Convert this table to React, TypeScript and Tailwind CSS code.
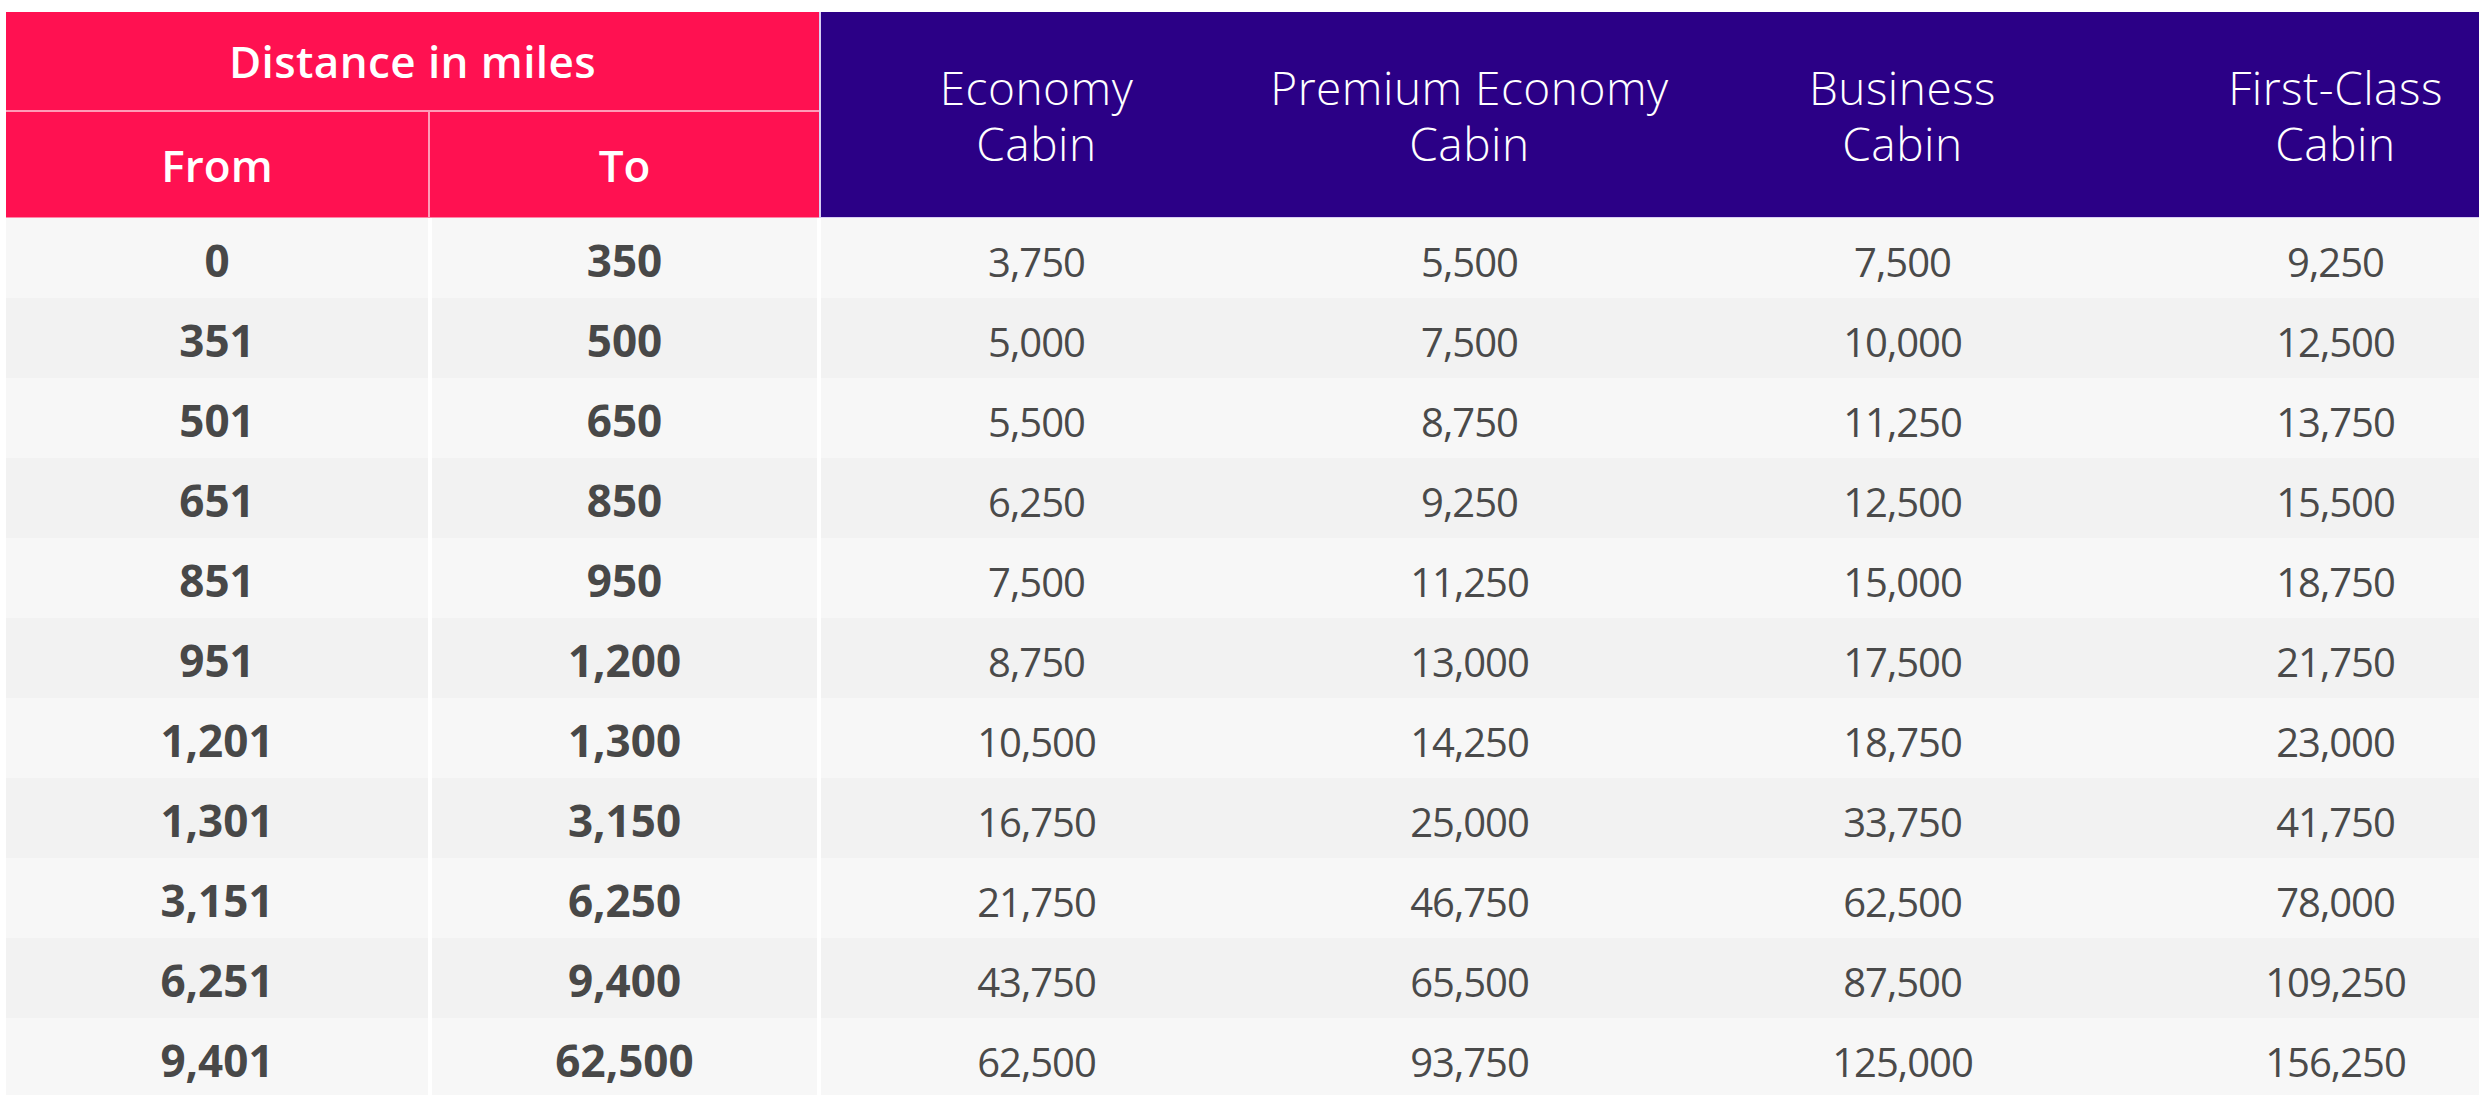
import React from 'react';

const rows: string[][] = [
  ['0', '350', '3,750', '5,500', '7,500', '9,250'],
  ['351', '500', '5,000', '7,500', '10,000', '12,500'],
  ['501', '650', '5,500', '8,750', '11,250', '13,750'],
  ['651', '850', '6,250', '9,250', '12,500', '15,500'],
  ['851', '950', '7,500', '11,250', '15,000', '18,750'],
  ['951', '1,200', '8,750', '13,000', '17,500', '21,750'],
  ['1,201', '1,300', '10,500', '14,250', '18,750', '23,000'],
  ['1,301', '3,150', '16,750', '25,000', '33,750', '41,750'],
  ['3,151', '6,250', '21,750', '46,750', '62,500', '78,000'],
  ['6,251', '9,400', '43,750', '65,500', '87,500', '109,250'],
  ['9,401', '62,500', '62,500', '93,750', '125,000', '156,250'],
];

const cabins = [
  ['Economy', 'Cabin'],
  ['Premium Economy', 'Cabin'],
  ['Business', 'Cabin'],
  ['First-Class', 'Cabin'],
];

export default function App() {
  return (
    <div className="w-full h-[1095px] overflow-hidden bg-white pl-[6px] pt-[12px] font-['Open_Sans',sans-serif]">
      <div className="w-[2547px]">
        {/* header */}
        <div className="flex h-[206px]">
          <div className="w-[813px] flex flex-col bg-[#ff1151] text-white border-b border-[#ff86a8]">
            <div className="h-[100px] flex items-center justify-center border-b-2 border-[#ff9bb7] text-[44px] font-semibold tracking-[0.4px]">
              Distance in miles
            </div>
            <div className="flex flex-1 text-[44px] font-semibold">
              <div className="w-[422px] flex items-center justify-center">From</div>
              <div className="flex-1 flex items-center justify-center border-l-2 border-[#ff9bb7]">To</div>
            </div>
          </div>
          <div className="flex bg-[#2b0086] text-white border-l-2 border-[#d8cdf3] border-b border-[#9a80dc]">
            {cabins.map(([a, b]) => (
              <div
                key={a}
                className="w-[433px] flex flex-col items-center justify-center pr-[2px] text-[46px] font-light leading-[56px] tracking-[0.5px]"
              >
                <span>{a}</span>
                <span>{b}</span>
              </div>
            ))}
          </div>
        </div>

        {/* body */}
        {rows.map((r, i) => (
          <div
            key={r[0]}
            className={`grid grid-cols-[422px_393px_433px_433px_433px_433px] h-[80px] ${
              i % 2 === 0 ? 'bg-[#f7f7f7]' : 'bg-[#f2f2f2]'
            }`}
          >
            <div className="flex items-center justify-center pt-[4px] text-[44px] font-bold text-[#484848] leading-none">
              {r[0]}
            </div>
            <div className="flex items-center justify-center pt-[4px] text-[44px] font-bold text-[#484848] leading-none border-x-4 border-white">
              {r[1]}
            </div>
            {r.slice(2).map((v, j) => (
              <div
                key={j}
                className="flex items-center justify-center pt-[8px] pr-[2px] text-[40px] tracking-[-1px] text-[#4a4a4a] leading-none"
              >
                {v}
              </div>
            ))}
          </div>
        ))}
      </div>
    </div>
  );
}
